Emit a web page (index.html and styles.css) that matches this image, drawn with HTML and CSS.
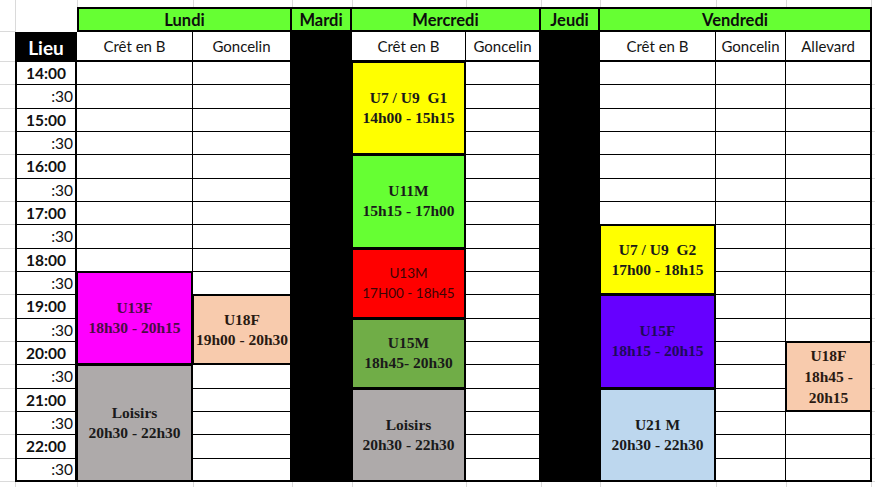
FILE: index.html
```html
<!DOCTYPE html>
<html lang="fr">
<head>
<meta charset="utf-8">
<title>Planning</title>
<link rel="stylesheet" href="styles.css">
</head>
<body>
<div class="sheet">
  <div class="gl"></div><div class="gl"></div><div class="gl"></div><div class="gl"></div><div class="gl"></div>
  <div class="gl"></div><div class="gl"></div><div class="gl"></div><div class="gl"></div><div class="gl gl-end"></div>

  <div class="blank"></div>
  <div class="day first span2">Lundi</div>
  <div class="day">Mardi</div>
  <div class="day span2">Mercredi</div>
  <div class="day">Jeudi</div>
  <div class="day span3">Vendredi</div>

  <div class="lieu">Lieu</div>
  <div class="sub">Crêt en B</div>
  <div class="sub end">Goncelin</div>
  <div class="black"></div>
  <div class="sub">Crêt en B</div>
  <div class="sub end">Goncelin</div>
  <div class="black"></div>
  <div class="sub">Crêt en B</div>
  <div class="sub">Goncelin</div>
  <div class="sub end">Allevard</div>

  <!-- r0 14:00 -->
  <div class="t">14:00</div>
  <div class="e"></div><div class="e end"></div>
  <div class="blk s4 yellow">U7 / U9&nbsp; G1<br>14h00 - 15h15</div>
  <div class="e end"></div>
  <div class="e"></div><div class="e"></div><div class="e end"></div>
  <!-- r1 -->
  <div class="t half">:30</div>
  <div class="e"></div><div class="e end"></div>
  <div class="e end"></div>
  <div class="e"></div><div class="e"></div><div class="e end"></div>
  <!-- r2 -->
  <div class="t">15:00</div>
  <div class="e"></div><div class="e end"></div>
  <div class="e end"></div>
  <div class="e"></div><div class="e"></div><div class="e end"></div>
  <!-- r3 -->
  <div class="t half">:30</div>
  <div class="e"></div><div class="e end"></div>
  <div class="e end"></div>
  <div class="e"></div><div class="e"></div><div class="e end"></div>
  <!-- r4 -->
  <div class="t">16:00</div>
  <div class="e"></div><div class="e end"></div>
  <div class="blk s4 green">U11M<br>15h15 - 17h00</div>
  <div class="e end"></div>
  <div class="e"></div><div class="e"></div><div class="e end"></div>
  <!-- r5 -->
  <div class="t half">:30</div>
  <div class="e"></div><div class="e end"></div>
  <div class="e end"></div>
  <div class="e"></div><div class="e"></div><div class="e end"></div>
  <!-- r6 -->
  <div class="t">17:00</div>
  <div class="e"></div><div class="e end"></div>
  <div class="e end"></div>
  <div class="e"></div><div class="e"></div><div class="e end"></div>
  <!-- r7 -->
  <div class="t half">:30</div>
  <div class="e"></div><div class="e end"></div>
  <div class="e end"></div>
  <div class="blk s3 yellow">U7 / U9&nbsp; G2<br>17h00 - 18h15</div>
  <div class="e"></div><div class="e end"></div>
  <!-- r8 -->
  <div class="t">18:00</div>
  <div class="e"></div><div class="e end"></div>
  <div class="blk s3 red sans">U13M<br>17H00 - 18h45</div>
  <div class="e end"></div>
  <div class="e"></div><div class="e end"></div>
  <!-- r9 -->
  <div class="t half">:30</div>
  <div class="blk s4 magenta">U13F<br>18h30 - 20h15</div>
  <div class="e end"></div>
  <div class="e end"></div>
  <div class="e"></div><div class="e end"></div>
  <!-- r10 -->
  <div class="t">19:00</div>
  <div class="blk s3 peach">U18F<br>19h00 - 20h30</div>
  <div class="e end"></div>
  <div class="blk s4 purple">U15F<br>18h15 - 20h15</div>
  <div class="e"></div><div class="e end"></div>
  <!-- r11 -->
  <div class="t half">:30</div>
  <div class="blk s3 green2">U15M<br>18h45- 20h30</div>
  <div class="e end"></div>
  <div class="e"></div><div class="e end"></div>
  <!-- r12 -->
  <div class="t">20:00</div>
  <div class="e end"></div>
  <div class="e"></div>
  <div class="blk s3 peach tall">U18F<br>18h45 -<br>20h15</div>
  <!-- r13 -->
  <div class="t half">:30</div>
  <div class="blk s5 gray">Loisirs<br>20h30 - 22h30</div>
  <div class="e end"></div>
  <div class="e end"></div>
  <div class="e"></div>
  <!-- r14 -->
  <div class="t">21:00</div>
  <div class="e end"></div>
  <div class="blk s4 gray">Loisirs<br>20h30 - 22h30</div>
  <div class="e end"></div>
  <div class="blk s4 blue">U21 M<br>20h30 - 22h30</div>
  <div class="e"></div>
  <!-- r15 -->
  <div class="t half">:30</div>
  <div class="e end"></div>
  <div class="e end"></div>
  <div class="e"></div><div class="e end"></div>
  <!-- r16 -->
  <div class="t">22:00</div>
  <div class="e end"></div>
  <div class="e end"></div>
  <div class="e"></div><div class="e end"></div>
  <!-- r17 -->
  <div class="t half last">:30</div>
  <div class="e end last"></div>
  <div class="e end last"></div>
  <div class="e last"></div><div class="e end last"></div>

  <div class="gl"></div><div class="gl"></div><div class="gl"></div><div class="gl"></div><div class="gl"></div>
  <div class="gl"></div><div class="gl"></div><div class="gl"></div><div class="gl"></div><div class="gl gl-end"></div>
</div>
</body>
</html>
```
FILE: styles.css
```css
* { box-sizing: border-box; }

body {
  margin: 0;
  min-height: 487px;
  background:
    linear-gradient(#dadada, #dadada) 0 31px / 15px 1px no-repeat,
    linear-gradient(#dadada, #dadada) 0 61px / 15px 1px no-repeat,
    repeating-linear-gradient(to bottom, transparent 0 22.333px, #dadada 22.333px 23.333px) 0 62px / 15px 420px no-repeat,
    repeating-linear-gradient(to bottom, transparent 0 22.333px, #dadada 22.333px 23.333px) 872px 62px / 3px 420px no-repeat,
    #fff;
  font-family: Lato, "Liberation Sans", sans-serif;
  color: #111;
}

.sheet {
  display: grid;
  grid-template-columns: 62px 116px 99px 60px 114px 75px 59px 116px 70px 86px;
  grid-template-rows: 7px 25px 30px repeat(18, 23.333px) 5px;
  margin-left: 15px;
  width: 857px;
}

.gl { border-left: 1px solid #dadada; }
.gl-end { border-right: 1px solid #dadada; }

.blank { border-left: 1px solid #dadada; }

.day {
  background: #66ff33;
  border-top: 2px solid #000;
  border-right: 2px solid #000;
  border-bottom: 2px solid #000;
  font-weight: 700;
  font-size: 16.5px;
  display: flex;
  align-items: center;
  justify-content: center;
  color: #0d0d0d;
}
.day.first { border-left: 2px solid #000; }
.span2 { grid-column: span 2; }
.span3 { grid-column: span 3; }

.lieu {
  background: #000;
  color: #fff;
  font-weight: 700;
  font-size: 19px;
  display: flex;
  align-items: center;
  justify-content: center;
  padding-top: 1px;
}

.sub {
  background: #fff;
  border-right: 1px solid #000;
  border-bottom: 2px solid #000;
  font-size: 15px;
  display: flex;
  align-items: center;
  justify-content: center;
  white-space: nowrap;
  color: #141414;
}
.sub.end { border-right: 2px solid #000; }

.black {
  background: #000;
  grid-row: span 19;
}

.t {
  border-left: 2px solid #000;
  border-right: 2px solid #000;
  border-bottom: 1px solid #000;
  font-weight: 700;
  font-size: 15.5px;
  display: flex;
  align-items: center;
  justify-content: center;
  background: #fff;
}
.t.half {
  font-weight: 400;
  justify-content: flex-end;
  padding-right: 2px;
}
.t.last { border-bottom: 2px solid #000; }

.e {
  background: #fff;
  border-right: 1px solid #000;
  border-bottom: 1px solid #000;
}
.e.end { border-right: 2px solid #000; }
.e.last { border-bottom: 2px solid #000; }

.blk {
  display: flex;
  align-items: center;
  justify-content: center;
  text-align: center;
  font-family: "Liberation Serif", "Times New Roman", serif;
  font-weight: 700;
  font-size: 15.5px;
  line-height: 20px;
  border-top: 1px solid #000;
  border-left: 1px solid #000;
  border-right: 2px solid #000;
  border-bottom: 2px solid #000;
  color: #1a1a1a;
  white-space: nowrap;
}
.blk.tall { line-height: 21px; }
.blk.sans {
  font-family: Lato, "Liberation Sans", sans-serif;
  font-weight: 400;
  font-size: 13.5px;
  color: #3a0505;
}

.s3 { grid-row: span 3; }
.s4 { grid-row: span 4; }
.s5 { grid-row: span 5; }

.yellow { background: #ffff00; }
.green { background: #66ff33; }
.green2 { background: #70ad47; }
.red { background: #ff0000; }
.magenta { background: #ff00ff; color: #4a0d45; }
.peach { background: #f8cbad; color: #2a1a12; }
.purple { background: #6600ff; color: #1e0b5a; }
.gray { background: #aeaaaa; }
.blue { background: #bdd7ee; }
```
